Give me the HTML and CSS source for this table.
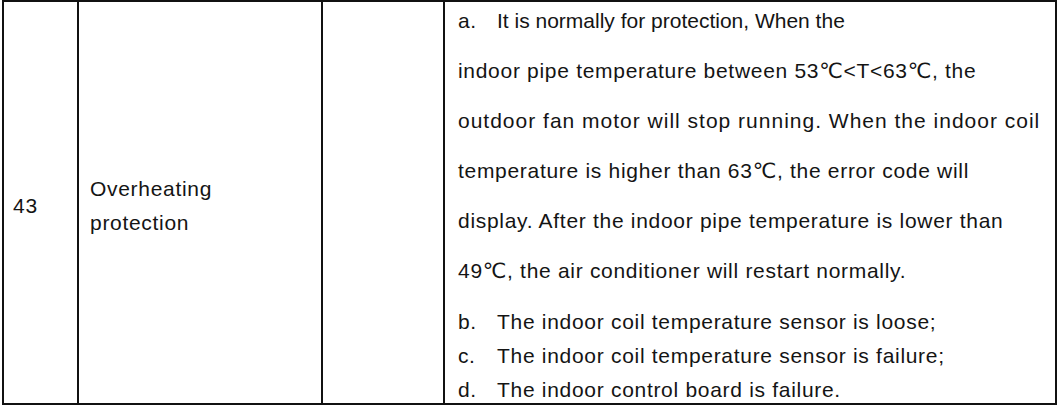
FILE: index.html
```html
<!DOCTYPE html>
<html lang="en">
<head>
<meta charset="utf-8">
<title>Error code 43</title>
<link rel="stylesheet" href="styles.css">
</head>
<body>
<div class="table">
  <div class="cell cell-code"><span class="cell-text">43</span></div>
  <div class="cell cell-name"><span class="cell-text">Overheating<br>protection</span></div>
  <div class="cell cell-empty"></div>
  <div class="cell cell-desc">
    <p class="para-a"><span class="label">a.</span><span class="line-tight">It is normally for protection, When the</span><br>indoor pipe temperature between 53℃&lt;T&lt;63℃, the<br><span class="line-loose">outdoor fan motor will stop running. When the indoor coil</span><br>temperature is higher than 63℃, the error code will<br>display. After the indoor pipe temperature is lower than<br>49℃, the air conditioner will restart normally.</p>
    <ul class="causes">
      <li><span class="label">b.</span>The indoor coil temperature sensor is loose;</li>
      <li><span class="label">c.</span>The indoor coil temperature sensor is failure;</li>
      <li><span class="label">d.</span>The indoor control board is failure.</li>
    </ul>
  </div>
</div>
</body>
</html>
```

FILE: styles.css
```css
html, body {
  margin: 0;
  padding: 0;
  background: #ffffff;
}

body {
  font-family: "Liberation Sans", Arial, "DejaVu Sans", sans-serif;
  font-size: 21px;
  color: #141414;
}

.table {
  margin-left: 2px;
  width: 1051px;
  height: 401px;
  border: 2px solid #111111;
  display: grid;
  grid-template-columns: 75px 244px 122px 610px;
}

.cell {
  border-right: 2px solid #111111;
  overflow: hidden;
}

.cell-desc {
  border-right: none;
  padding-left: 13px;
  white-space: nowrap;
  letter-spacing: 0.7px;
}

.cell-code,
.cell-name {
  display: flex;
  align-items: center;
  padding-top: 7px;
  line-height: 34px;
  letter-spacing: 0.7px;
}

.cell-code {
  padding-left: 9px;
}

.cell-name {
  padding-left: 11px;
}

.para-a {
  margin: -6px 0 0 0;
  line-height: 50px;
}

.line-tight {
  letter-spacing: 0;
}

.line-loose {
  letter-spacing: 1px;
}

.label {
  display: inline-block;
  width: 39px;
  letter-spacing: 0.5px;
}

.causes {
  list-style: none;
  margin: 9px 0 0 0;
  padding: 0;
  line-height: 34px;
}
```
